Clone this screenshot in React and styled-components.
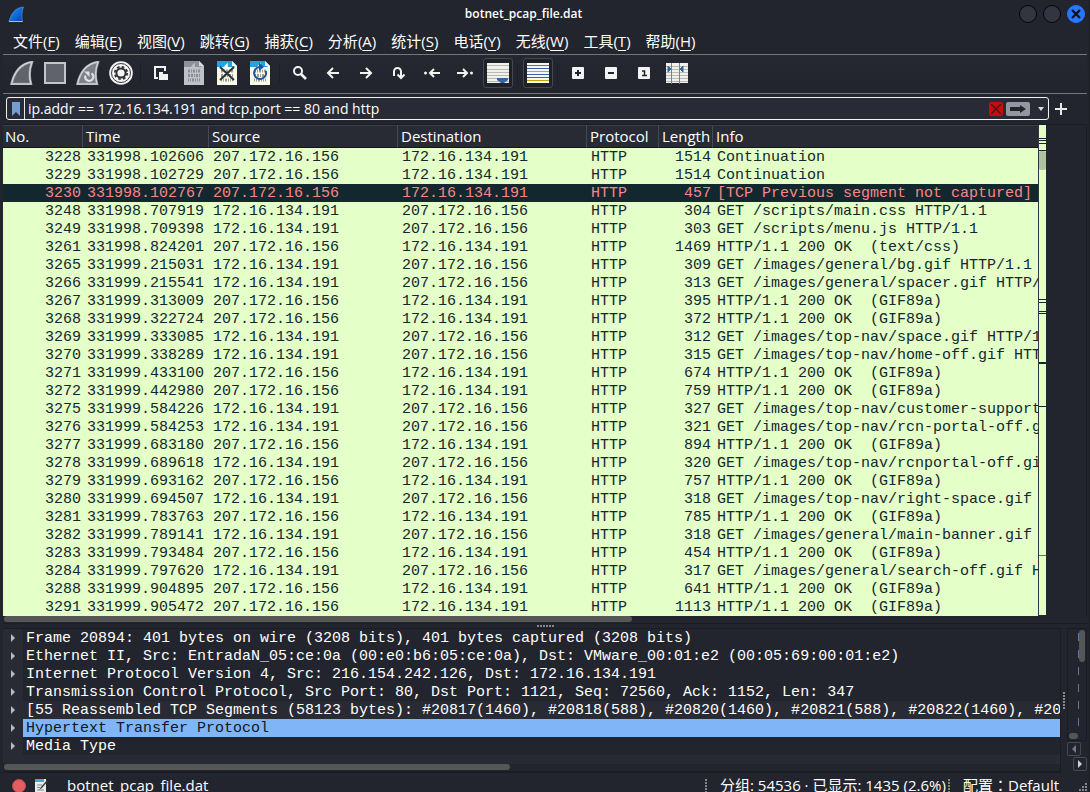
import React, { useState } from 'react';
import styled, { createGlobalStyle } from 'styled-components';

const GlobalStyle = createGlobalStyle`
  * { box-sizing: border-box; }
  body {
    margin: 0;
    height: 100vh;
    overflow: hidden;
    background: #23252e;
    color: #fff;
    font: 15px/22px "Open Sans", "Noto Sans CJK SC", sans-serif;
  }
  button, input {
    font: inherit;
    color: inherit;
    background: none;
    border: 0;
    padding: 0;
  }
`;

const Window = styled.div`
  display: flex;
  flex-direction: column;
  min-height: 100vh;
  padding: 0 2px 0 3px;
  background: #23252e;
  border-right: 1px solid #1b1d25;
`;

const TitleBar = styled.header`
  display: grid;
  grid-template-columns: 70px 1fr 70px;
  align-items: center;
  height: 28px;
  padding: 0 2px 0 5px;
`;

const Title = styled.h1`
  margin: 0;
  padding-right: 46px;
  text-align: center;
  font-size: 12px;
  font-weight: 600;
  line-height: 28px;
`;

const WindowButtons = styled.div`
  display: flex;
  justify-content: flex-end;
  gap: 6px;
`;

const WindowButton = styled.button`
  display: flex;
  flex: none;
  align-items: center;
  justify-content: center;
  width: 18px;
  height: 18px;
  border: 1px solid ${(p) => (p.$close ? '#2577ff' : '#050608')};
  border-radius: 50%;
  background: ${(p) => (p.$close ? '#2777ff' : '#333641')};
`;

const MenuBar = styled.nav`
  display: flex;
  height: 27px;
  padding-left: 2px;
  border-bottom: 1px solid #75767b;
`;

const MenuItem = styled.button`
  padding: 0 7px 0 8px;
  line-height: 26px;
  white-space: nowrap;

  u {
    text-underline-offset: 3px;
    text-decoration-thickness: 1px;
  }
`;

const Toolbar = styled.div`
  display: flex;
  align-items: center;
  height: 39px;
  padding: 0 2px 2px;
  background: linear-gradient(#262831, #22242d);
  border-bottom: 1px solid #75767b;
`;

const ToolButton = styled.button`
  display: flex;
  flex: none;
  align-items: center;
  justify-content: center;
  width: 33px;
  height: 30px;

  svg { display: block; }
`;

const ToggleFrame = styled.span`
  display: flex;
  align-items: center;
  justify-content: center;
  width: 30px;
  height: 30px;
  border: 1px solid #454850;
  border-radius: 3px;
  background: #1f2128;
`;

const Separator = styled.span`
  flex: none;
  width: 1px;
  height: 20px;
  margin: 0 3px;
  background: #1c1e26;
`;

const FilterRow = styled.div`
  display: flex;
  align-items: center;
  padding: 3px 14px 5px 3px;
`;

const FilterBox = styled.div`
  display: flex;
  flex: 1;
  align-items: center;
  height: 23px;
  border: 1px solid #f2f2f2;
  border-radius: 3px;
  background: #282a35;
`;

const Bookmark = styled.button`
  display: flex;
  align-items: center;
  justify-content: center;
  width: 18px;
  height: 21px;
  border-right: 1px solid #e8e8e8;
`;

const FilterInput = styled.input`
  flex: 1;
  min-width: 0;
  height: 21px;
  padding: 0 3px;
  outline: 0;
  font-size: 14px;
`;

const FilterButton = styled.button`
  display: flex;
  align-items: center;
  justify-content: center;
  width: ${(p) => p.$width};
  height: 14px;
  margin-right: 3px;
  border-radius: 2px;
  background: ${(p) => p.$color || 'none'};

  &:last-child { margin-right: 0; }
`;

const AddButton = styled.button`
  display: flex;
  justify-content: center;
  width: 24px;
`;

const PacketPane = styled.section`
  display: flex;
  flex: 1;
  margin-top: -1px;
  border: solid #1b1d25;
  border-width: 1px 1px 0 0;
`;

const TableWrap = styled.div`
  flex: 1;
  min-width: 0;
  overflow: hidden;
`;

const PacketTable = styled.table`
  width: 100%;
  table-layout: fixed;
  border-collapse: separate;
  border-spacing: 0;
  background: #e4ffc7;
`;

const HeadCell = styled.th`
  height: 23px;
  padding: 0 3px 0 2px;
  overflow: hidden;
  border-right: 1px solid #454953;
  border-bottom: 1px solid #14161c;
  border-top: 1px solid #3c3f48;
  background: #282b34;
  font-weight: 400;
  text-align: left;
  line-height: 21px;

  & + & { padding-left: 3px; }
  &:last-child { border-right: 0; }
`;

const Row = styled.tr`
  color: ${(p) => (p.$bad ? '#f78787' : '#12272e')};
  background: ${(p) => (p.$bad ? '#12272e' : '#e4ffc7')};
`;

const Cell = styled.td`
  height: 18px;
  padding: ${(p) => (p.$right ? '2px 2px 0 0' : '2px 0 0 4px')};
  overflow: hidden;
  text-align: ${(p) => (p.$right ? 'right' : 'left')};
  font: 15px/16px "Liberation Mono", monospace;
  white-space: pre;
`;

const MiniMap = styled.svg`
  flex: none;
  width: 8px;
  height: 490px;
  border-left: 1px solid #33363f;
  background: #e4ffc7;
`;

const PaneMargin = styled.div`
  flex: none;
  width: 40px;
`;

const ScrollTrack = styled.div`
  height: 8px;
  padding: 0 1px 1px;
  border-bottom: 1px solid #1b1d25;
`;

const ScrollThumb = styled.div`
  width: ${(p) => p.$width};
  height: 6px;
  border-radius: 3px;
  background: #565656;
`;

const Splitter = styled.div`
  display: flex;
  align-items: center;
  justify-content: center;
  flex: none;
  height: ${(p) => (p.$vertical ? 'auto' : '4px')};
  width: ${(p) => (p.$vertical ? '6px' : 'auto')};
`;

const Dots = styled.span`
  width: ${(p) => (p.$vertical ? '2px' : '17px')};
  height: ${(p) => (p.$vertical ? '17px' : '2px')};
  background: repeating-linear-gradient(
    ${(p) => (p.$vertical ? '180deg' : '90deg')},
    #85868b 0 2px, transparent 2px 3px
  );
`;

const LowerPanes = styled.div`
  display: flex;
  flex: none;
`;

const DetailPane = styled.section`
  display: flex;
  flex: 1;
  flex-direction: column;
  min-width: 0;
  border: 1px solid #1b1d25;
  border-left: 0;
  background: #23252e;
`;

const Tree = styled.ul`
  margin: 0;
  padding: 0 0 9px;
  list-style: none;
  background: #282a34;
`;

const TreeRow = styled.li`
  display: flex;
  height: 18px;
`;

const Expander = styled.button`
  display: flex;
  flex: none;
  align-items: center;
  justify-content: center;
  width: 20px;
`;

const TreeText = styled.span`
  flex: 1;
  min-width: 0;
  padding: 2px 0 0 3px;
  overflow: hidden;
  font: 15px/16px "Liberation Mono", monospace;
  white-space: pre;
  color: ${(p) => (p.$selected ? '#101820' : '#fff')};
  background: ${(p) => (p.$selected ? '#80b5f8' : p.$light ? '#282a34' : '#23252e')};
`;

const BytesColumn = styled.aside`
  display: flex;
  flex: none;
  flex-direction: column;
  align-items: flex-end;
  width: 20px;
`;

const BytesPane = styled.div`
  width: 20px;
  height: 113px;
  border: 1px solid #1b1d25;
`;

const TabArrow = styled.button`
  display: flex;
  align-items: center;
  justify-content: center;
  width: 14px;
  height: 14px;
  margin-top: 1px;
  align-self: ${(p) => p.$side};
  border: 1px solid #474a53;
  border-radius: 2px;
`;

const StatusBar = styled.footer`
  display: flex;
  flex: none;
  align-items: center;
  height: 28px;
  padding-left: 9px;
  white-space: nowrap;
`;

const StatusIcon = styled.button`
  display: flex;
  width: 22px;
  padding-bottom: 3px;
`;

const FileName = styled.span`
  flex: 1;
  padding: 0 0 4px 11px;
`;

const StatusText = styled.span`
  width: ${(p) => p.$width};
  padding: 0 0 4px 13px;
`;

const Profile = styled(StatusText)`
  font-family: "Open Sans", "Noto Sans CJK TC", sans-serif;
`;

const menus = [
  ['文件', 'F'], ['编辑', 'E'], ['视图', 'V'], ['跳转', 'G'], ['捕获', 'C'], ['分析', 'A'],
  ['统计', 'S'], ['电话', 'Y'], ['无线', 'W'], ['工具', 'T'], ['帮助', 'H'],
];

const columns = [
  ['No.', 80], ['Time', 126], ['Source', 189], ['Destination', 189],
  ['Protocol', 72], ['Length', 54], ['Info'],
];

const S = '207.172.16.156';
const C = '172.16.134.191';
const gif = 'HTTP/1.1 200 OK  (GIF89a)';

const packets = [
  [3228, '331998.102606', S, 1514, 'Continuation'],
  [3229, '331998.102729', S, 1514, 'Continuation'],
  [3230, '331998.102767', S, 457, '[TCP Previous segment not captured]'],
  [3248, '331998.707919', C, 304, 'GET /scripts/main.css HTTP/1.1'],
  [3249, '331998.709398', C, 303, 'GET /scripts/menu.js HTTP/1.1'],
  [3261, '331998.824201', S, 1469, 'HTTP/1.1 200 OK  (text/css)'],
  [3265, '331999.215031', C, 309, 'GET /images/general/bg.gif HTTP/1.1'],
  [3266, '331999.215541', C, 313, 'GET /images/general/spacer.gif HTTP/1.1'],
  [3267, '331999.313009', S, 395, gif],
  [3268, '331999.322724', S, 372, gif],
  [3269, '331999.333085', C, 312, 'GET /images/top-nav/space.gif HTTP/1.1'],
  [3270, '331999.338289', C, 315, 'GET /images/top-nav/home-off.gif HTTP/1.1'],
  [3271, '331999.433100', S, 674, gif],
  [3272, '331999.442980', S, 759, gif],
  [3275, '331999.584226', C, 327, 'GET /images/top-nav/customer-support-off.gif HTTP/1.1'],
  [3276, '331999.584253', C, 321, 'GET /images/top-nav/rcn-portal-off.gif HTTP/1.1'],
  [3277, '331999.683180', S, 894, gif],
  [3278, '331999.689618', C, 320, 'GET /images/top-nav/rcnportal-off.gif HTTP/1.1'],
  [3279, '331999.693162', S, 757, gif],
  [3280, '331999.694507', C, 318, 'GET /images/top-nav/right-space.gif HTTP/1.1'],
  [3281, '331999.783763', S, 785, gif],
  [3282, '331999.789141', C, 318, 'GET /images/general/main-banner.gif HTTP/1.1'],
  [3283, '331999.793484', S, 454, gif],
  [3284, '331999.797620', C, 317, 'GET /images/general/search-off.gif HTTP/1.1'],
  [3288, '331999.904895', S, 641, gif],
  [3291, '331999.905472', S, 1113, gif],
];

const details = [
  'Frame 20894: 401 bytes on wire (3208 bits), 401 bytes captured (3208 bits)',
  'Ethernet II, Src: EntradaN_05:ce:0a (00:e0:b6:05:ce:0a), Dst: VMware_00:01:e2 (00:05:69:00:01:e2)',
  'Internet Protocol Version 4, Src: 216.154.242.126, Dst: 172.16.134.191',
  'Transmission Control Protocol, Src Port: 80, Dst Port: 1121, Seq: 72560, Ack: 1152, Len: 347',
  '[55 Reassembled TCP Segments (58123 bytes): #20817(1460), #20818(588), #20820(1460), #20821(588), #20822(1460), #20824(588)]',
  'Hypertext Transfer Protocol',
  'Media Type',
];

const FIN = 'M1.500 23C4 12 9 3 22 1C19 9 19 16 21 23Z';

function AppLogo() {
  return (
    <svg width="16" height="17" viewBox="0 0 16 17">
      <defs>
        <linearGradient id="fin" x1="0" y1="0" x2="1" y2="1">
          <stop offset="0" stopColor="#1ba0ff" />
          <stop offset="1" stopColor="#0638b8" />
        </linearGradient>
      </defs>
      <path d="M1 15.500C3 8 7 1.500 15.500 1C13.500 6 13.500 11 14.500 15.500Z" fill="url(#fin)" stroke="#6d9bd8" strokeWidth="0.600" />
      <path d="M1 15.500H14.500" stroke="#9cc4f5" />
    </svg>
  );
}

function FinIcon({ restart }) {
  return (
    <svg width="24" height="24" viewBox="0 0 24 24">
      <path d={FIN} fill={restart ? '#7d8088' : '#60636b'} stroke="#8b8e95" strokeWidth="2.600" />
      <path d={FIN} fill="none" stroke="#d0d2d7" strokeWidth="1.400" />
      {restart && (
        <g fill="none" stroke="#e0e1e5" strokeWidth="2.200">
          <path d="M9.500 14.500A4 4 0 1 0 15.500 12.500" />
          <path d="M8 10.500H13.500V16Z" fill="#e0e1e5" stroke="none" />
        </g>
      )}
    </svg>
  );
}

function StopIcon() {
  return (
    <svg width="22" height="22">
      <rect x="1" y="1" width="20" height="20" fill="#60636b" stroke="#c3c5cb" strokeWidth="2" />
    </svg>
  );
}

function OptionsIcon() {
  return (
    <svg width="24" height="24" viewBox="0 0 24 24">
      <circle cx="12" cy="12" r="11.800" fill="#f3f3f3" />
      <circle cx="12" cy="12" r="9.500" fill="none" stroke="#3c3d42" strokeWidth="1" />
      <circle cx="12" cy="12" r="6.200" fill="none" stroke="#303136" strokeWidth="1.800" strokeDasharray="2.600 2.270" />
      <circle cx="12" cy="12" r="4.600" fill="none" stroke="#303136" strokeWidth="2" />
    </svg>
  );
}

function OpenIcon() {
  return (
    <svg width="14" height="16" viewBox="0 0 14 16">
      <path d="M11 6V2H1V13H4" fill="none" stroke="#f3f3f3" strokeWidth="2" />
      <path d="M5 7H9V9H14V15H5Z" fill="#f3f3f3" />
    </svg>
  );
}

function FileIcon({ kind }) {
  const off = kind === 'save';
  return (
    <svg width="20" height="24" viewBox="0 0 20 24">
      <path d="M0 0H15L20 5V24H0Z" fill={off ? '#bfc1c7' : '#fafae8'} />
      <path d="M0 0H15L19 4L17 6H0Z" fill={off ? '#8e919a' : '#24a3e2'} />
      <path d="M7 6C8 4 9 3 11 2C10.500 4 11 5 11 7H6Z" fill={off ? '#bfc1c7' : '#fafae8'} />
      <path d="M15 0L20 5H15Z" fill={off ? '#d9dade' : '#f4f4f4'} />
      <g fill="none" stroke={off ? '#8b8e96' : '#9b9c94'} strokeWidth="3">
        <path d="M4 10H16" strokeDasharray="2 1 1 1" />
        <path d="M4 14.500H16" strokeDasharray="2 1 2 1 1 1" />
        <path d="M4 19H16" strokeDasharray="1 1 1 1 2 1" />
      </g>
      {kind === 'close' && <path d="M3 6L17 19M17 6L3 19" stroke="#2c3135" strokeWidth="2" />}
      {kind === 'reload' && (
        <g fill="none" stroke="#22579f" strokeWidth="2">
          <path d="M15.800 10A6 6 0 1 1 9.500 6" />
          <path d="M9 1.500V10L14 6Z" fill="#22579f" stroke="none" />
        </g>
      )}
    </svg>
  );
}

function FindIcon() {
  return (
    <svg width="14" height="14" viewBox="0 0 14 14" fill="none" stroke="#f3f3f3">
      <circle cx="5" cy="5" r="4" strokeWidth="2" />
      <path d="M8 8L13 13" strokeWidth="2.600" />
    </svg>
  );
}

const arrows = {
  back: 'M13 7H2M7 2L2 7L7 12',
  forward: 'M1 7H12M7 2L12 7L7 12',
  jump: 'M2 10V5.500A3.500 3.500 0 0 1 9 5.500V11M5.500 8.500L9 12L12.500 8.500',
  first: 'M16 7H6M10 3L6 7L10 11',
  last: 'M0 7H10M6 3L10 7L6 11',
};

function ArrowIcon({ kind }) {
  const wide = kind === 'first' || kind === 'last';
  const w = wide ? 16 : 14;
  return (
    <svg width={w} height="14" viewBox={`0 0 ${w} 14`} fill="none" stroke="#f3f3f3" strokeWidth="2">
      <path d={arrows[kind]} />
      {wide && <circle cx={kind === 'first' ? 1.5 : 14.5} cy="7" r="1.500" fill="#f3f3f3" stroke="none" />}
    </svg>
  );
}

function AutoScrollIcon() {
  return (
    <svg width="22" height="20">
      <path d="M0 0H22V20H0Z" fill="#f0f0ec" />
      <path d="M0 2.500H22M0 6.500H22M0 9.500H22M0 12.500H22M0 15.500H22M0 18.500H22" stroke="#b8b9b4" />
      <path d="M10 15H21V17L17 20H14L10 17Z" fill="#3465a4" />
    </svg>
  );
}

function ColorizeIcon() {
  const lines = ['#e23838', '#3465a4', '#73d216', '#3465a4', '#75507b', '#c4a000'];
  return (
    <svg width="22" height="20">
      <path d="M0 0H22V20H0Z" fill="#f5f5f5" />
      {lines.map((c, i) => <path key={i} d={`M0 ${3 * i + 2.5}H22`} stroke={c} />)}
    </svg>
  );
}

function ZoomIcon({ sign }) {
  const marks = { in: 'M3 6H9M6 3V9', out: 'M3 6H9', one: 'M4 4H6.500V9M4 8.500H9' };
  return (
    <svg width="12" height="12">
      <rect width="12" height="12" rx="1" fill="#f3f3f3" />
      <path d={marks[sign]} fill="none" stroke="#22242c" strokeWidth={sign === 'one' ? 1.5 : 2} />
    </svg>
  );
}

function ResizeIcon() {
  return (
    <svg width="22" height="21">
      <path d="M0 0H22V20H0Z" fill="#f0f0ec" />
      <path d="M0 3.500H22M0 6.500H22M0 9.500H22M0 12.500H22M0 15.500H22M0 18.500H22" stroke="#b8b9b4" />
      <path d="M5.500 0V21M13.500 0V21" stroke="#80817c" />
      <path d="M2 3L5 6L2 9ZM17 3L14 6L17 9Z" fill="#3465a4" stroke="#3465a4" />
    </svg>
  );
}

const tools = [
  ['开始捕获', <FinIcon />],
  ['停止捕获', <StopIcon />],
  ['重新开始捕获', <FinIcon restart />],
  ['捕获选项', <OptionsIcon />],
  null,
  ['打开', <OpenIcon />],
  ['保存', <FileIcon kind="save" />],
  ['关闭', <FileIcon kind="close" />],
  ['重新加载', <FileIcon kind="reload" />],
  null,
  ['查找', <FindIcon />],
  ['后退', <ArrowIcon kind="back" />],
  ['前进', <ArrowIcon kind="forward" />],
  ['转到分组', <ArrowIcon kind="jump" />],
  ['首个分组', <ArrowIcon kind="first" />],
  ['最新分组', <ArrowIcon kind="last" />],
  ['自动滚动', <ToggleFrame><AutoScrollIcon /></ToggleFrame>],
  null,
  ['着色', <ToggleFrame><ColorizeIcon /></ToggleFrame>],
  null,
  ['放大', <ZoomIcon sign="in" />],
  ['缩小', <ZoomIcon sign="out" />],
  ['原始大小', <ZoomIcon sign="one" />],
  ['调整列宽', <ResizeIcon />],
];

function PacketList() {
  return (
    <PacketPane>
      <TableWrap>
        <PacketTable>
          <colgroup>
            {columns.map(([name, width]) => <col key={name} width={width} />)}
          </colgroup>
          <thead>
            <tr>{columns.map(([name]) => <HeadCell key={name}>{name}</HeadCell>)}</tr>
          </thead>
          <tbody>
            {packets.map(([no, time, src, length, info]) => (
              <Row key={no} $bad={no === 3230}>
                <Cell $right>{no}</Cell>
                <Cell>{time}</Cell>
                <Cell>{src}</Cell>
                <Cell>{src === S ? C : S}</Cell>
                <Cell>HTTP</Cell>
                <Cell $right>{length}</Cell>
                <Cell>{info}</Cell>
              </Row>
            ))}
          </tbody>
        </PacketTable>
      </TableWrap>
      <MiniMap>
        <rect y="26" width="7" height="19" rx="2" fill="#b1c19f" />
        <path d="M0 13.500H7M0 15.500H7M0 18.500H7M0 25.500H7M0 174.500H7M0 177.500H7M0 186.500H7M0 188.500H7M0 281.500H7" stroke="#12272e" />
        <path d="M0 238H7" stroke="#12272e" strokeWidth="2" />
        <path d="M0 430.500H7" stroke="#2777ff" />
      </MiniMap>
      <PaneMargin />
    </PacketPane>
  );
}

function Details() {
  const [selected, setSelected] = useState(5);
  return (
    <DetailPane>
      <Tree>
        {details.map((text, i) => (
          <TreeRow key={i} onClick={() => setSelected(i)}>
            <Expander aria-label="展开">
              <svg width="4" height="8"><path d="M0 0L4 4L0 8Z" fill="#b8babd" /></svg>
            </Expander>
            <TreeText $selected={i === selected} $light={i === 4}>{text}</TreeText>
          </TreeRow>
        ))}
      </Tree>
      <ScrollTrack><ScrollThumb $width="48%" /></ScrollTrack>
    </DetailPane>
  );
}

function Bytes() {
  return (
    <BytesColumn>
      <BytesPane>
        <svg width="18" height="111" fill="none">
          {[0, 1, 2, 3, 4, 5].map((i) => (
            <path key={i} d={`M10.500 ${4 + i * 17}V${12 + i * 17}`} stroke="#58799f" />
          ))}
          <rect x="11" y="1" width="6" height="32" rx="3" fill="#565656" />
          <rect x="1" y="104" width="9" height="6" rx="3" fill="#565656" />
        </svg>
      </BytesPane>
      <TabArrow $side="flex-start" aria-label="向左">
        <svg width="4" height="8"><path d="M4 0L0 4L4 8Z" fill="#777a80" /></svg>
      </TabArrow>
      <TabArrow $side="flex-end" aria-label="向右">
        <svg width="4" height="8"><path d="M0 0L4 4L0 8Z" fill="#d0d1d4" /></svg>
      </TabArrow>
    </BytesColumn>
  );
}

export default function App() {
  const [filter, setFilter] = useState('ip.addr == 172.16.134.191 and tcp.port == 80 and http');

  return (
    <>
      <GlobalStyle />
      <Window>
        <TitleBar>
          <AppLogo />
          <Title>botnet_pcap_file.dat</Title>
          <WindowButtons>
            <WindowButton aria-label="最小化" />
            <WindowButton aria-label="最大化" />
            <WindowButton $close aria-label="关闭窗口">
              <svg width="10" height="10"><path d="M1 1L9 9M9 1L1 9" stroke="#10131b" strokeWidth="2.400" /></svg>
            </WindowButton>
          </WindowButtons>
        </TitleBar>

        <MenuBar>
          {menus.map(([name, key]) => (
            <MenuItem key={key}>{name}(<u>{key}</u>)</MenuItem>
          ))}
        </MenuBar>

        <Toolbar>
          {tools.map((tool, i) => (tool
            ? <ToolButton key={i} aria-label={tool[0]}>{tool[1]}</ToolButton>
            : <Separator key={i} />))}
        </Toolbar>

        <FilterRow>
          <FilterBox>
            <Bookmark aria-label="书签">
              <svg width="8" height="14"><path d="M0 0H8V14L4 10L0 14Z" fill="#729fcf" /></svg>
            </Bookmark>
            <FilterInput aria-label="显示过滤器" value={filter} onChange={(e) => setFilter(e.target.value)} />
            <FilterButton $width="14px" $color="#cc0a0a" aria-label="清除" onClick={() => setFilter('')}>
              <svg width="10" height="10"><path d="M0 0L10 10M10 0L0 10" stroke="#40191c" strokeWidth="1.500" /></svg>
            </FilterButton>
            <FilterButton $width="24px" $color="#9497a0" aria-label="应用">
              <svg width="16" height="8"><path d="M0 2H10V0L16 4L10 8V6H0Z" fill="#23252e" /></svg>
            </FilterButton>
            <FilterButton $width="15px" aria-label="历史">
              <svg width="6" height="4"><path d="M0 0H6L3 4Z" fill="#d8d9db" /></svg>
            </FilterButton>
          </FilterBox>
          <AddButton aria-label="添加">
            <svg width="12" height="12"><path d="M0 6H12M6 0V12" stroke="#e8e8e8" strokeWidth="2" /></svg>
          </AddButton>
        </FilterRow>

        <PacketList />
        <ScrollTrack><ScrollThumb $width="58%" /></ScrollTrack>
        <Splitter><Dots /></Splitter>

        <LowerPanes>
          <Details />
          <Splitter $vertical><Dots $vertical /></Splitter>
          <Bytes />
        </LowerPanes>

        <StatusBar>
          <StatusIcon aria-label="专家信息">
            <svg width="14" height="14"><circle cx="7" cy="7" r="6.500" fill="#e35d62" stroke="#c44a50" /></svg>
          </StatusIcon>
          <StatusIcon aria-label="捕获文件注释">
            <svg width="15" height="15">
              <path d="M1 1H12V14H1Z" fill="#eceded" />
              <path d="M1 1H10V4H1Z" fill="#4aa6d8" />
              <path d="M3 7H8M3 9.500H6M3 12H10" stroke="#85888c" />
              <path d="M13 2L7 9L5 12L8 10L14 3Z" fill="#34373c" />
            </svg>
          </StatusIcon>
          <FileName>botnet_pcap_file.dat</FileName>
          <Dots $vertical />
          <StatusText $width="241px">分组: 54536 · 已显示: 1435 (2.6%)</StatusText>
          <Dots $vertical />
          <Profile $width="129px">配置：Default</Profile>
          <svg width="8" height="8"><path d="M6 0H8V2H6ZM3 3H5V5H3ZM6 3H8V5H6ZM0 6H2V8H0ZM3 6H5V8H3ZM6 6H8V8H6Z" fill="#85868b" /></svg>
        </StatusBar>
      </Window>
    </>
  );
}
